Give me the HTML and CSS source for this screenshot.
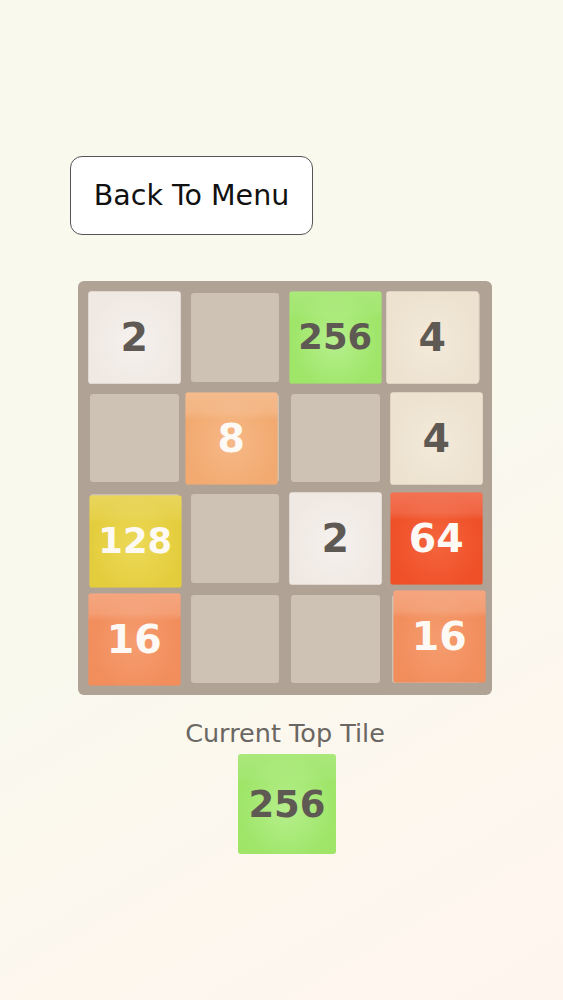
FILE: index.html
```html
<!DOCTYPE html>
<html lang="en">
<head>
    <meta charset="UTF-8">
    <meta name="viewport" content="width=device-width, initial-scale=1.0">
    <title>2048</title>
    <link rel="stylesheet" href="styles.css">
</head>
<body>
    <div class="page">
        <button class="menu-button">Back To Menu</button>

        <div class="board">
            <div class="cell"><div class="tile tile-2">2</div></div>
            <div class="cell"></div>
            <div class="cell"><div class="tile tile-256 small">256</div></div>
            <div class="cell"><div class="tile tile-4 nudge-left">4</div></div>

            <div class="cell"></div>
            <div class="cell"><div class="tile tile-8 nudge-left">8</div></div>
            <div class="cell"></div>
            <div class="cell"><div class="tile tile-4">4</div></div>

            <div class="cell"><div class="tile tile-128 small nudge-down">128</div></div>
            <div class="cell"></div>
            <div class="cell"><div class="tile tile-2">2</div></div>
            <div class="cell"><div class="tile tile-64">64</div></div>

            <div class="cell"><div class="tile tile-16">16</div></div>
            <div class="cell"></div>
            <div class="cell"></div>
            <div class="cell"><div class="tile tile-16 nudge-up">16</div></div>
        </div>

        <div class="summary">
            <div class="summary-label">Current Top Tile</div>
            <div class="tile tile-256 top-tile">256</div>
        </div>
    </div>
</body>
</html>
```

FILE: styles.css
```css
html, body {
    height: 100%;
}
body {
    margin: 0;
    font-family: "DejaVu Sans", Verdana, sans-serif;
    background: linear-gradient(150deg, #f9f9ee 0%, #f9f9ee 50%, #fdf7ee 78%, #fff5ef 100%);
    color: #5f5954;
}
.page {
    padding: 156px 0 0 70px;
}
.menu-button {
    display: block;
    width: 243px;
    height: 79px;
    padding: 0;
    background: #fff;
    border: 1.5px solid #555;
    border-radius: 12px;
    font-family: "DejaVu Sans", Verdana, sans-serif;
    font-size: 28.5px;
    color: #111;
}
.board {
    box-sizing: border-box;
    width: 414px;
    height: 414px;
    margin: 46px 0 0 8px;
    padding: 12px;
    display: grid;
    grid-template-columns: repeat(4, 1fr);
    grid-template-rows: repeat(4, 1fr);
    gap: 12px;
    background: #b0a295;
    border-radius: 6px;
}
.cell {
    background: #cdc2b4;
    border-radius: 3px;
    display: flex;
}
.tile {
    flex: 1;
    display: flex;
    align-items: center;
    justify-content: center;
    border-radius: 3px;
    font-weight: bold;
    font-size: 38px;
    transform: scale(1.04);
}
.tile.small {
    font-size: 34px;
}
.nudge-left { transform: translateX(-4px) scale(1.04); }
.nudge-up { transform: translate(3px, -3px) scale(1.04); }
.nudge-down { transform: translate(1px, 3px) scale(1.04); }

.tile-2 {
    background: radial-gradient(ellipse at 50% 55%, #f5f1ed 0%, #f0e9e3 70%);
}
.tile-4 {
    background: radial-gradient(ellipse at 50% 55%, #f3eadb 0%, #ede2cf 70%);
}
.tile-8 {
    color: #fdfaf6;
    background:
        linear-gradient(to bottom, rgba(255,255,255,0.2) 0%, rgba(255,255,255,0.12) 22%, rgba(255,255,255,0) 30%),
        radial-gradient(ellipse at 50% 55%, #f6b887 0%, #f2aa70 70%);
}
.tile-16 {
    color: #fdfaf6;
    background:
        linear-gradient(to bottom, rgba(255,255,255,0.22) 0%, rgba(255,255,255,0.14) 22%, rgba(255,255,255,0) 30%),
        radial-gradient(ellipse at 50% 55%, #f59d6f 0%, #f28d5c 70%);
}
.tile-64 {
    color: #fdfaf6;
    background:
        linear-gradient(to bottom, rgba(255,255,255,0.2) 0%, rgba(255,255,255,0.12) 22%, rgba(255,255,255,0) 30%),
        radial-gradient(ellipse at 50% 55%, #f4653d 0%, #ef5028 70%);
}
.tile-128 {
    color: #fdfaf6;
    background:
        linear-gradient(to bottom, rgba(255,255,255,0.16) 0%, rgba(255,255,255,0.08) 22%, rgba(255,255,255,0) 30%),
        radial-gradient(ellipse at 50% 55%, #ecd958 0%, #e4cd3c 70%);
}
.tile-256 {
    color: #5f5954;
    background:
        linear-gradient(to bottom, rgba(255,255,255,0.12) 0%, rgba(255,255,255,0.06) 22%, rgba(255,255,255,0) 30%),
        radial-gradient(ellipse at 50% 55%, #b6ef8c 0%, #9ee568 70%);
}
.summary {
    width: 414px;
    margin: 23px 0 0 8px;
    display: flex;
    flex-direction: column;
    align-items: center;
}
.summary-label {
    font-size: 25.5px;
    color: #6a6662;
}
.summary .top-tile {
    flex: none;
    width: 98px;
    height: 100px;
    margin-top: 6px;
    margin-left: 4px;
    font-size: 37px;
    transform: none;
}
```
